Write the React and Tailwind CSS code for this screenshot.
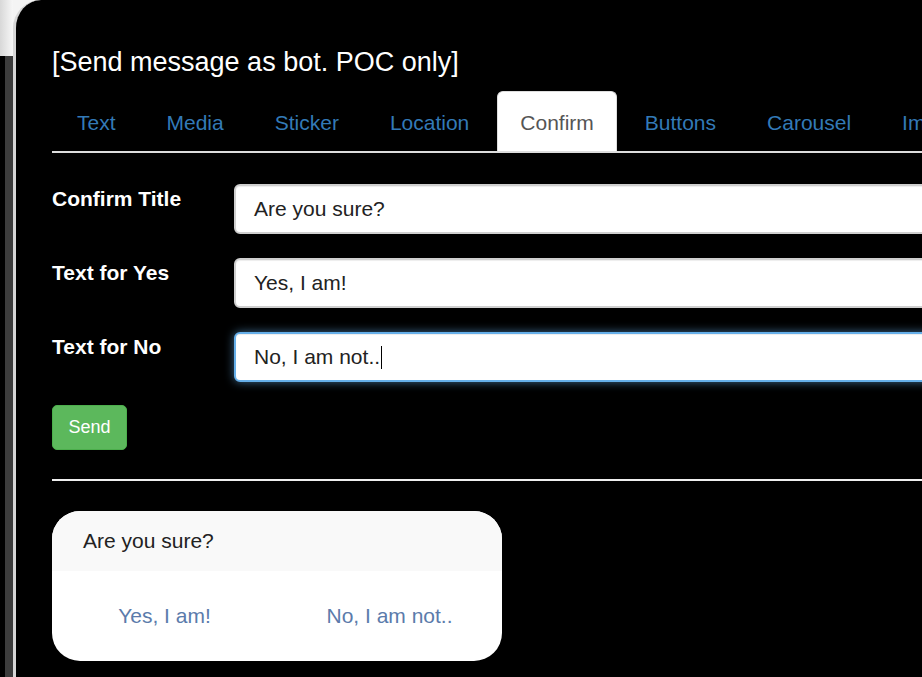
import React from "react";

const tabs = ["Text", "Media", "Sticker", "Location", "Confirm", "Buttons", "Carousel", "Imagemap"];

function Row({ label, value, focused, caret }) {
  return (
    <div className="flex items-start">
      <div className="w-[182px] shrink-0 font-bold text-[21px] leading-[30px] text-white">{label}</div>
      <div
        className={
          "flex-1 h-[50px] rounded-[6px] bg-white border-2 flex items-center pl-[18px] text-[21px] leading-[30px] text-[#222] " +
          (focused
            ? "border-[#66afe9] shadow-[inset_0_1px_1px_rgba(0,0,0,0.075),0_0_10px_rgba(102,175,233,0.6)]"
            : "border-[#cfcfcf] shadow-[inset_0_1px_1px_rgba(0,0,0,0.075)]")
        }
      >
        <span>{value}</span>
        {caret && <span className="inline-block w-[1px] h-[23px] bg-black ml-[1px]" />}
      </div>
    </div>
  );
}

export default function App() {
  return (
    <div className="w-[922px] h-[677px] overflow-hidden flex bg-black font-['Liberation_Sans',Arial,sans-serif]">
      <div className="w-[13px] shrink-0 flex flex-col">
        <div className="h-[56px] bg-gradient-to-r from-[#d8d8d8] to-[#f7f7f7]" />
        <div className="flex-1 flex">
          <div className="w-[5px] bg-black" />
          <div className="w-[8px] bg-[#3c3c3c]" />
        </div>
      </div>
      <div className="flex-1 min-w-0 bg-[#f4f4f4]">
        <div className="h-full rounded-tl-[28px] border-l-[3px] border-[#d6d6d6] bg-black pl-[36px] overflow-hidden">
          <div className="w-[1000px]">
            <div className="pt-[47px] text-[27px] leading-[30px] text-white">[Send message as bot. POC only]</div>
            <div className="mt-[14px] pl-[2px] flex border-b-2 border-[#dddddd] whitespace-nowrap">
              {tabs.map((t) => (
                <div
                  key={t}
                  className={
                    "h-[60px] pt-[16px] px-[22px] leading-[30px] text-[21px] border border-b-0 rounded-t-[6px] mr-[5px] " +
                    (t === "Confirm"
                      ? "bg-white border-[#dddddd] text-[#555555]"
                      : "border-transparent text-[#337ab7]")
                  }
                >
                  {t}
                </div>
              ))}
            </div>
            <div className="mt-[31px] flex flex-col gap-[24px]">
              <Row label="Confirm Title" value="Are you sure?" />
              <Row label="Text for Yes" value="Yes, I am!" />
              <Row label="Text for No" value="No, I am not.." focused caret />
            </div>
            <button className="mt-[23px] w-[75px] h-[45px] rounded-[5px] bg-[#5cb85c] border border-[#4cae4c] text-white text-[18px] leading-[27px] block">
              Send
            </button>
            <div className="mt-[29px] h-[2px] bg-[#eeeeee]" />
            <div className="mt-[30px] w-[450px] h-[150px] rounded-[28px] bg-white overflow-hidden flex flex-col">
              <div className="h-[60px] bg-[#f9f9f9] flex items-center pl-[31px] text-[21px] text-[#222]">Are you sure?</div>
              <div className="flex-1 flex items-center text-[21px] text-[#5b7bab]">
                <div className="flex-1 text-center">Yes, I am!</div>
                <div className="flex-1 text-center">No, I am not..</div>
              </div>
            </div>
          </div>
        </div>
      </div>
    </div>
  );
}
